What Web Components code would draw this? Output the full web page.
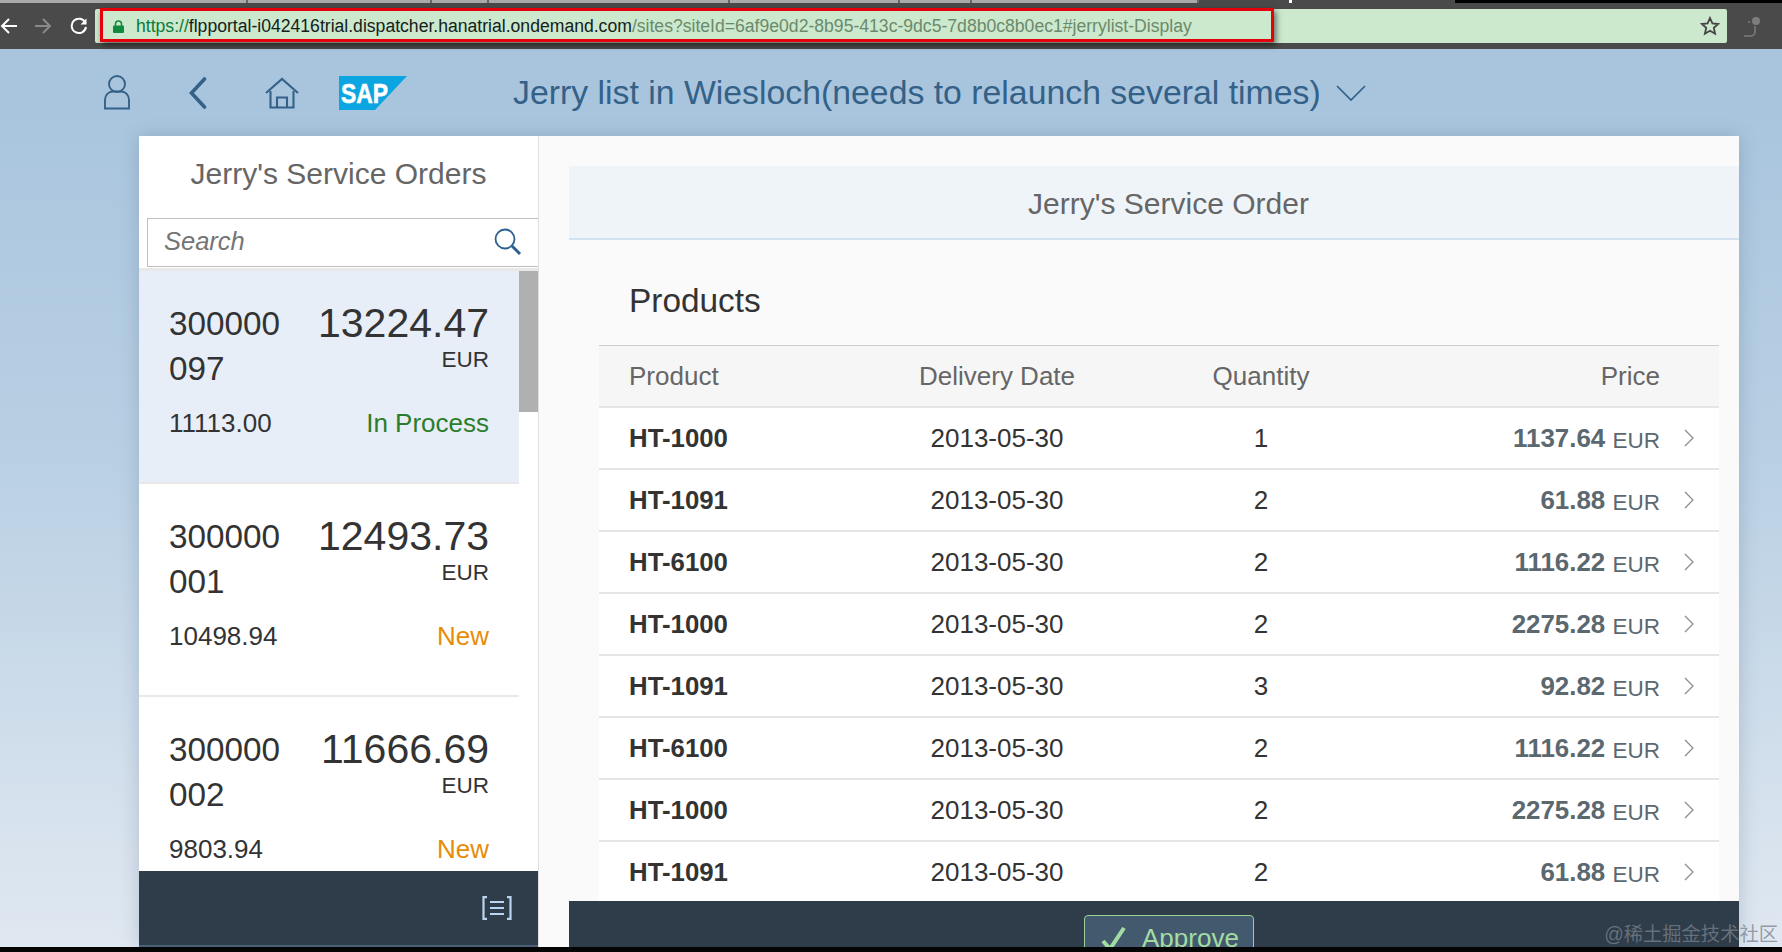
<!DOCTYPE html>
<html>
<head>
<meta charset="utf-8">
<title>Jerry list</title>
<style>
  html, body { height: 100%; }
  body {
    margin: 0;
    height: 952px;
    overflow: hidden;
    display: flex;
    flex-direction: column;
    font-family: "Liberation Sans", Arial, sans-serif;
    background: #000;
  }
  #page {
    flex: 1;
    min-height: 0;
    display: flex;
    flex-direction: column;
    background: linear-gradient(#a9c5de 0, #a9c5de 60px, #bbd1e4 440px, #d5e1ed 750px, #e0e8f1 100%);
  }
  #bottom { height: 5px; background: #050505; flex: none; }
</style>
</head>
<body>
<browser-bar url-host="flpportal-i042416trial.dispatcher.hanatrial.ondemand.com" url-rest="/sites?siteId=6af9e0d2-8b95-413c-9dc5-7d8b0c8b0ec1#jerrylist-Display"></browser-bar>
<div id="page">
  <shell-bar>Jerry list in Wiesloch(needs to relaunch several times)</shell-bar>
  <app-frame>
    <master-list slot="master">
      <order-item number="300000097" amount="13224.47" net="11113.00" status="In Process" selected></order-item>
      <order-item number="300000001" amount="12493.73" net="10498.94" status="New"></order-item>
      <order-item number="300000002" amount="11666.69" net="9803.94" status="New"></order-item>
    </master-list>
    <detail-page slot="detail">
      <product-row name="HT-1000" date="2013-05-30" qty="1" price="1137.64"></product-row>
      <product-row name="HT-1091" date="2013-05-30" qty="2" price="61.88"></product-row>
      <product-row name="HT-6100" date="2013-05-30" qty="2" price="1116.22"></product-row>
      <product-row name="HT-1000" date="2013-05-30" qty="2" price="2275.28"></product-row>
      <product-row name="HT-1091" date="2013-05-30" qty="3" price="92.82"></product-row>
      <product-row name="HT-6100" date="2013-05-30" qty="2" price="1116.22"></product-row>
      <product-row name="HT-1000" date="2013-05-30" qty="2" price="2275.28"></product-row>
      <product-row name="HT-1091" date="2013-05-30" qty="2" price="61.88"></product-row>
    </detail-page>
  </app-frame>
</div>
<div id="bottom"></div>
<water-mark>@稀土掘金技术社区</water-mark>

<script>
class BrowserBar extends HTMLElement {
  connectedCallback() {
    const host = this.getAttribute('url-host');
    const rest = this.getAttribute('url-rest');
    this.attachShadow({ mode: 'open' }).innerHTML = `
      <style>
        :host { display: block; flex: none; height: 49px; background: #4a4a4a; position: relative; }
        .tabs { display: flex; height: 4px; background: #4a4a4a; }
        .tabs i { display: block; height: 3px; background: #a9a9a9; border-right: 2px solid #666; box-sizing: border-box; flex: none; }
        .tabs .cur { background: #4a4a4a; border: 0; width: 256px; }
        .tabs .cur u { display: block; width: 3px; height: 3px; margin-left: 90px; background: #fff; }
        .tabs .rest { background: #000; border: 0; flex: 1; }
        .bar { display: flex; align-items: center; height: 34px; margin-top: 5px; }
        .nav { width: 96px; flex: none; display: flex; align-items: center; }
        .omni {
          flex: none; width: 1632px; height: 34px; margin-left: -1px; box-sizing: border-box;
          background: #cce8cd; border-radius: 2px; display: flex; align-items: center;
          padding-left: 18px; position: relative;
          font-size: 17.6px; white-space: nowrap; color: #6b8a6c;
        }
        .omni b { font-weight: normal; color: #14201a; }
        .omni em { font-style: normal; color: #0b7a3a; }
        .omni svg.lock { margin-right: 12px; }
        .star { position: absolute; right: 7px; top: 7px; }
        .ext { position: absolute; left: 1740px; top: 15px; }
        .mark {
          position: absolute; left: 100px; top: 8px; width: 1174px; height: 34px; box-sizing: border-box;
          border: 3px solid #e5000b; box-shadow: 2px 3px 6px rgba(0,0,0,.55);
        }
      </style>
      <div class="tabs">
        <i style="width:248px"></i><i style="width:184px"></i><i style="width:57px"></i><i style="width:241px"></i><i style="width:170px"></i><i style="width:72px"></i><i style="width:227px"></i>
        <i class="cur"><u></u></i><i class="rest"></i>
      </div>
      <div class="bar">
        <div class="nav">
          <svg width="18" height="18" viewBox="0 0 18 18" fill="none" stroke="#fff" stroke-width="2"><path d="M17 9H2M9 2 2 9l7 7"/></svg>
          <svg style="margin-left:16px" width="18" height="18" viewBox="0 0 18 18" fill="none" stroke="#8a8a8a" stroke-width="2"><path d="M1 9h15M9 2l7 7-7 7"/></svg>
          <svg style="margin-left:18px" width="18" height="18" viewBox="0 0 18 18" fill="none" stroke="#fff" stroke-width="2"><path d="M15.5 6A7.2 7.2 0 1 0 16 10"/><path d="M16.5 1.5v6h-6" fill="#fff" stroke="none"/></svg>
        </div>
        <div class="omni">
          <svg class="lock" width="11" height="13" viewBox="0 0 11 13"><path d="M2.5 6V4a3 3 0 0 1 6 0v2" fill="none" stroke="#0f8a3e" stroke-width="1.5"/><rect y="5.5" width="11" height="7.5" rx="1" fill="#0f8a3e"/></svg>
          <span><em>https://</em><b>${host}</b>${rest}</span>
          <svg class="star" width="20" height="20" viewBox="0 0 20 20" fill="none" stroke="#444" stroke-width="1.8"><path d="M10 2l2.4 5.4 5.8.6-4.4 3.9 1.3 5.8L10 14.7l-5.1 3 1.3-5.8L1.8 8l5.8-.6z"/></svg>
        </div>
        <svg class="ext" width="24" height="24" viewBox="0 0 24 24" fill="none" stroke="#7d7d7d" stroke-width="1.5"><circle cx="16" cy="6" r="4" fill="#7d7d7d" stroke="none"/><path d="M15 11v6c0 3-3 4-5 4H4"/><circle cx="9" cy="7" r="1" fill="#7d7d7d" stroke="none"/></svg>
      </div>
      <div class="mark"></div>
    `;
  }
}

class ShellBar extends HTMLElement {
  constructor() {
    super();
    this.attachShadow({ mode: 'open' }).innerHTML = `
      <style>
        :host { display: flex; flex: none; height: 87px; align-items: center; padding-left: 103px; color: #346187; box-sizing: border-box; }
        svg { flex: none; }
        .title { font-size: 33.8px; margin-left: 106px; white-space: nowrap; }
        .down { margin-left: 15px; margin-top: 2px; }
      </style>
      <svg width="28" height="35" viewBox="0 0 28 35" fill="none" stroke="#346187" stroke-width="1.9"><ellipse cx="14" cy="9" rx="8" ry="8"/><path d="M2 33.500V25c0-5 3.500-8.500 8-8.500h8c4.500 0 8 3.500 8 8.500v8.500z"/></svg>
      <svg style="margin-left:58px" width="18" height="32" viewBox="0 0 18 32" fill="none" stroke="#346187" stroke-width="3.600" stroke-linecap="round"><path d="M15.500 2 2.500 16l13 14"/></svg>
      <svg style="margin-left:58px" width="34" height="32" viewBox="0 0 34 32" fill="none" stroke="#346187" stroke-width="2.100"><path d="M1 16 17 2l16 14"/><path d="M5.500 14v16.500h23V14"/><path d="M12 30.500V20.500h10v10"/></svg>
      <svg style="margin-left:40px" width="68" height="34" viewBox="0 0 68 34">
        <path d="M0 0h68L36 34H0z" fill="#0ba5e1"/>
        <text x="2" y="27" font-family="Liberation Sans" font-weight="700" font-size="28" fill="#fff" stroke="#fff" stroke-width=".6" textLength="47" lengthAdjust="spacingAndGlyphs">SAP</text>
      </svg>
      <span class="title"><slot></slot></span>
      <svg class="down" width="30" height="17" viewBox="0 0 30 17" fill="none" stroke="#346187" stroke-width="1.700"><path d="M1 1l14 14L29 1"/></svg>
    `;
  }
}

class AppFrame extends HTMLElement {
  constructor() {
    super();
    this.attachShadow({ mode: 'open' }).innerHTML = `
      <style>
        :host {
          display: flex; flex: 1; min-height: 0; margin-left: 139px; width: 1600px;
          box-shadow: 0 0 18px rgba(40,70,100,.22);
        }
        ::slotted([slot="master"]) { width: 400px; flex: none; }
        ::slotted([slot="detail"]) { flex: 1; min-width: 0; }
      </style>
      <slot name="master"></slot>
      <slot name="detail"></slot>
    `;
  }
}

class MasterList extends HTMLElement {
  constructor() {
    super();
    this.attachShadow({ mode: 'open' }).innerHTML = `
      <style>
        :host {
          display: flex; flex-direction: column; background: #fff; min-height: 0;
          box-sizing: border-box; border-right: 1px solid #e0e0e0; color: #333;
        }
        h2 {
          margin: 0; height: 82px; flex: none; display: flex; align-items: center; justify-content: center;
          font-size: 30px; font-weight: normal; color: #666; padding-bottom: 6px; box-sizing: border-box;
        }
        .search {
          flex: none; margin-left: 8px; height: 49px; box-sizing: border-box;
          border: 1px solid #bfbfbf; border-right: none;
          display: flex; align-items: center; justify-content: space-between;
          padding: 0 16px 2px 16px;
          font-size: 25.500px; font-style: italic; color: #757575;
        }
        .rule { flex: none; height: 4px; box-sizing: border-box; border-bottom: 3px solid #e8e8e8; }
        .scroll { flex: 1; min-height: 0; display: flex; overflow: hidden; }
        .items { flex: 1; min-width: 0; }
        .track { flex: none; width: 19px; }
        .thumb { height: 141px; background: #b0b0b0; }
        footer {
          flex: none; height: 76px; box-sizing: border-box; background: #2f3c49;
          border-bottom: 2px solid #4a6075;
          display: flex; align-items: center; justify-content: flex-end; padding-right: 25px;
        }
      </style>
      <h2>Jerry's Service Orders</h2>
      <div class="search">
        <span>Search</span>
        <svg width="28" height="28" viewBox="0 0 28 28" fill="none" stroke="#2b6190" stroke-width="1.800"><circle cx="11" cy="11" r="9.500"/><path d="M18 18l8 8" stroke-width="3"/></svg>
      </div>
      <div class="rule"></div>
      <div class="scroll">
        <div class="items"><slot></slot></div>
        <div class="track"><div class="thumb"></div></div>
      </div>
      <footer>
        <svg width="32" height="24" viewBox="0 0 32 24" fill="none" stroke="#b9d5ef" stroke-width="2.200"><path d="M6 1.200H2.500v21.600H6M26 1.200h3.500v21.600H26"/><path d="M9 6h14M9 12h14M9 18h14"/></svg>
      </footer>
    `;
  }
}

class OrderItem extends HTMLElement {
  connectedCallback() {
    const status = this.getAttribute('status');
    this.attachShadow({ mode: 'open' }).innerHTML = `
      <style>
        :host {
          display: block; height: 213px; box-sizing: border-box;
          padding: 30px 30px 0 30px; border-bottom: 2px solid #e8e8e8; color: #333;
        }
        :host([selected]) { background: #e7eef7; }
        .top, .bottom { display: flex; justify-content: space-between; }
        .num { width: 118px; font-size: 33.300px; line-height: 45px; word-break: break-all; }
        .right { text-align: right; }
        .amt { font-size: 41px; line-height: 45px; }
        .cur { font-size: 22.500px; line-height: 28px; }
        .bottom { margin-top: 17px; font-size: 26px; line-height: 30px; }
        .st { color: ${status === 'New' ? '#e78c07' : '#2b7d2b'}; }
      </style>
      <div class="top">
        <div class="num">${this.getAttribute('number')}</div>
        <div class="right"><div class="amt">${this.getAttribute('amount')}</div><div class="cur">EUR</div></div>
      </div>
      <div class="bottom"><span>${this.getAttribute('net')}</span><span class="st">${status}</span></div>
    `;
  }
}

class DetailPage extends HTMLElement {
  constructor() {
    super();
    this.attachShadow({ mode: 'open' }).innerHTML = `
      <style>
        :host {
          display: flex; flex-direction: column; min-height: 0; background: #fafafa;
          --cols: 257px 282px 246px 276px 59px;
        }
        .head {
          flex: none; margin: 30px 0 0 30px; height: 74px; box-sizing: border-box;
          background: #eff4f9; border-bottom: 2px solid #d3e2f0;
          display: flex; align-items: center; justify-content: center;
          padding: 3px 0 0 29px;
          font-size: 30px; color: #666;
        }
        h3 {
          flex: none; margin: 0; height: 105px; box-sizing: border-box; padding: 16px 0 0 90px;
          display: flex; align-items: center; font-size: 33.400px; font-weight: normal; color: #333;
        }
        .table { flex: 1; min-height: 0; overflow: hidden; margin: 0 20px 0 60px; }
        .cols {
          display: grid; grid-template-columns: var(--cols); height: 63px; box-sizing: border-box; align-items: center;
          background: #f6f6f6; border-top: 1px solid #ccc; border-bottom: 2px solid #e5e5e5;
          font-size: 26px; color: #666;
        }
        .cols span { text-align: center; }
        .cols span:first-child { text-align: left; padding-left: 30px; }
        .cols span:nth-child(4) { text-align: right; }
        footer { flex: none; margin-left: 30px; height: 46px; background: #2f3c49; overflow: hidden; padding-left: 515px; }
        button {
          display: flex; align-items: center; height: 50px; width: 170px; margin-top: 14px; box-sizing: border-box;
          padding: 0 0 3px 16px; background: #435a6e; border: 1px solid #9ad09a; border-radius: 4px;
          color: #a2dca2; font: 26px "Liberation Sans", Arial, sans-serif;
        }
        button svg { margin-right: 15px; }
      </style>
      <div class="head">Jerry's Service Order</div>
      <h3>Products</h3>
      <div class="table">
        <div class="cols"><span>Product</span><span>Delivery Date</span><span>Quantity</span><span>Price</span><span></span></div>
        <slot></slot>
      </div>
      <footer>
        <button><svg width="26" height="24" viewBox="0 0 26 24" fill="none" stroke="#a2dca2" stroke-width="4"><path d="M2 14l7 8L23 1"/></svg>Approve</button>
      </footer>
    `;
  }
}

class ProductRow extends HTMLElement {
  connectedCallback() {
    this.attachShadow({ mode: 'open' }).innerHTML = `
      <style>
        :host {
          display: grid; grid-template-columns: var(--cols); height: 62px; box-sizing: border-box; align-items: center;
          background: #fff; border-bottom: 2px solid #e5e5e5; color: #333; font-size: 26px;
        }
        div { text-align: center; }
        .name { text-align: left; padding-left: 30px; font-weight: 700; font-size: 25.800px; }
        .price { text-align: right; color: #5b6870; }
        .price b { font-size: 25.900px; }
        .price span { font-size: 22.500px; vertical-align: -1px; }
        svg { display: block; margin-left: 24px; }
      </style>
      <div class="name">${this.getAttribute('name')}</div>
      <div>${this.getAttribute('date')}</div>
      <div>${this.getAttribute('qty')}</div>
      <div class="price"><b>${this.getAttribute('price')}</b> <span>EUR</span></div>
      <svg width="10" height="18" viewBox="0 0 10 18" fill="none" stroke="#8a8a8a" stroke-width="1.200"><path d="M1 1l8 8-8 8"/></svg>
    `;
  }
}

class WaterMark extends HTMLElement {
  constructor() {
    super();
    this.attachShadow({ mode: 'open' }).innerHTML = `
      <style>
        :host {
          position: absolute; right: 4px; top: 923px; font-size: 19.300px; line-height: 24px; white-space: nowrap;
          color: rgba(120,130,140,.75); font-family: "Liberation Sans", "Noto Sans CJK SC", sans-serif;
        }
      </style>
      <slot></slot>
    `;
  }
}

customElements.define('browser-bar', BrowserBar);
customElements.define('shell-bar', ShellBar);
customElements.define('app-frame', AppFrame);
customElements.define('master-list', MasterList);
customElements.define('order-item', OrderItem);
customElements.define('detail-page', DetailPage);
customElements.define('product-row', ProductRow);
customElements.define('water-mark', WaterMark);
</script>
</body>
</html>
